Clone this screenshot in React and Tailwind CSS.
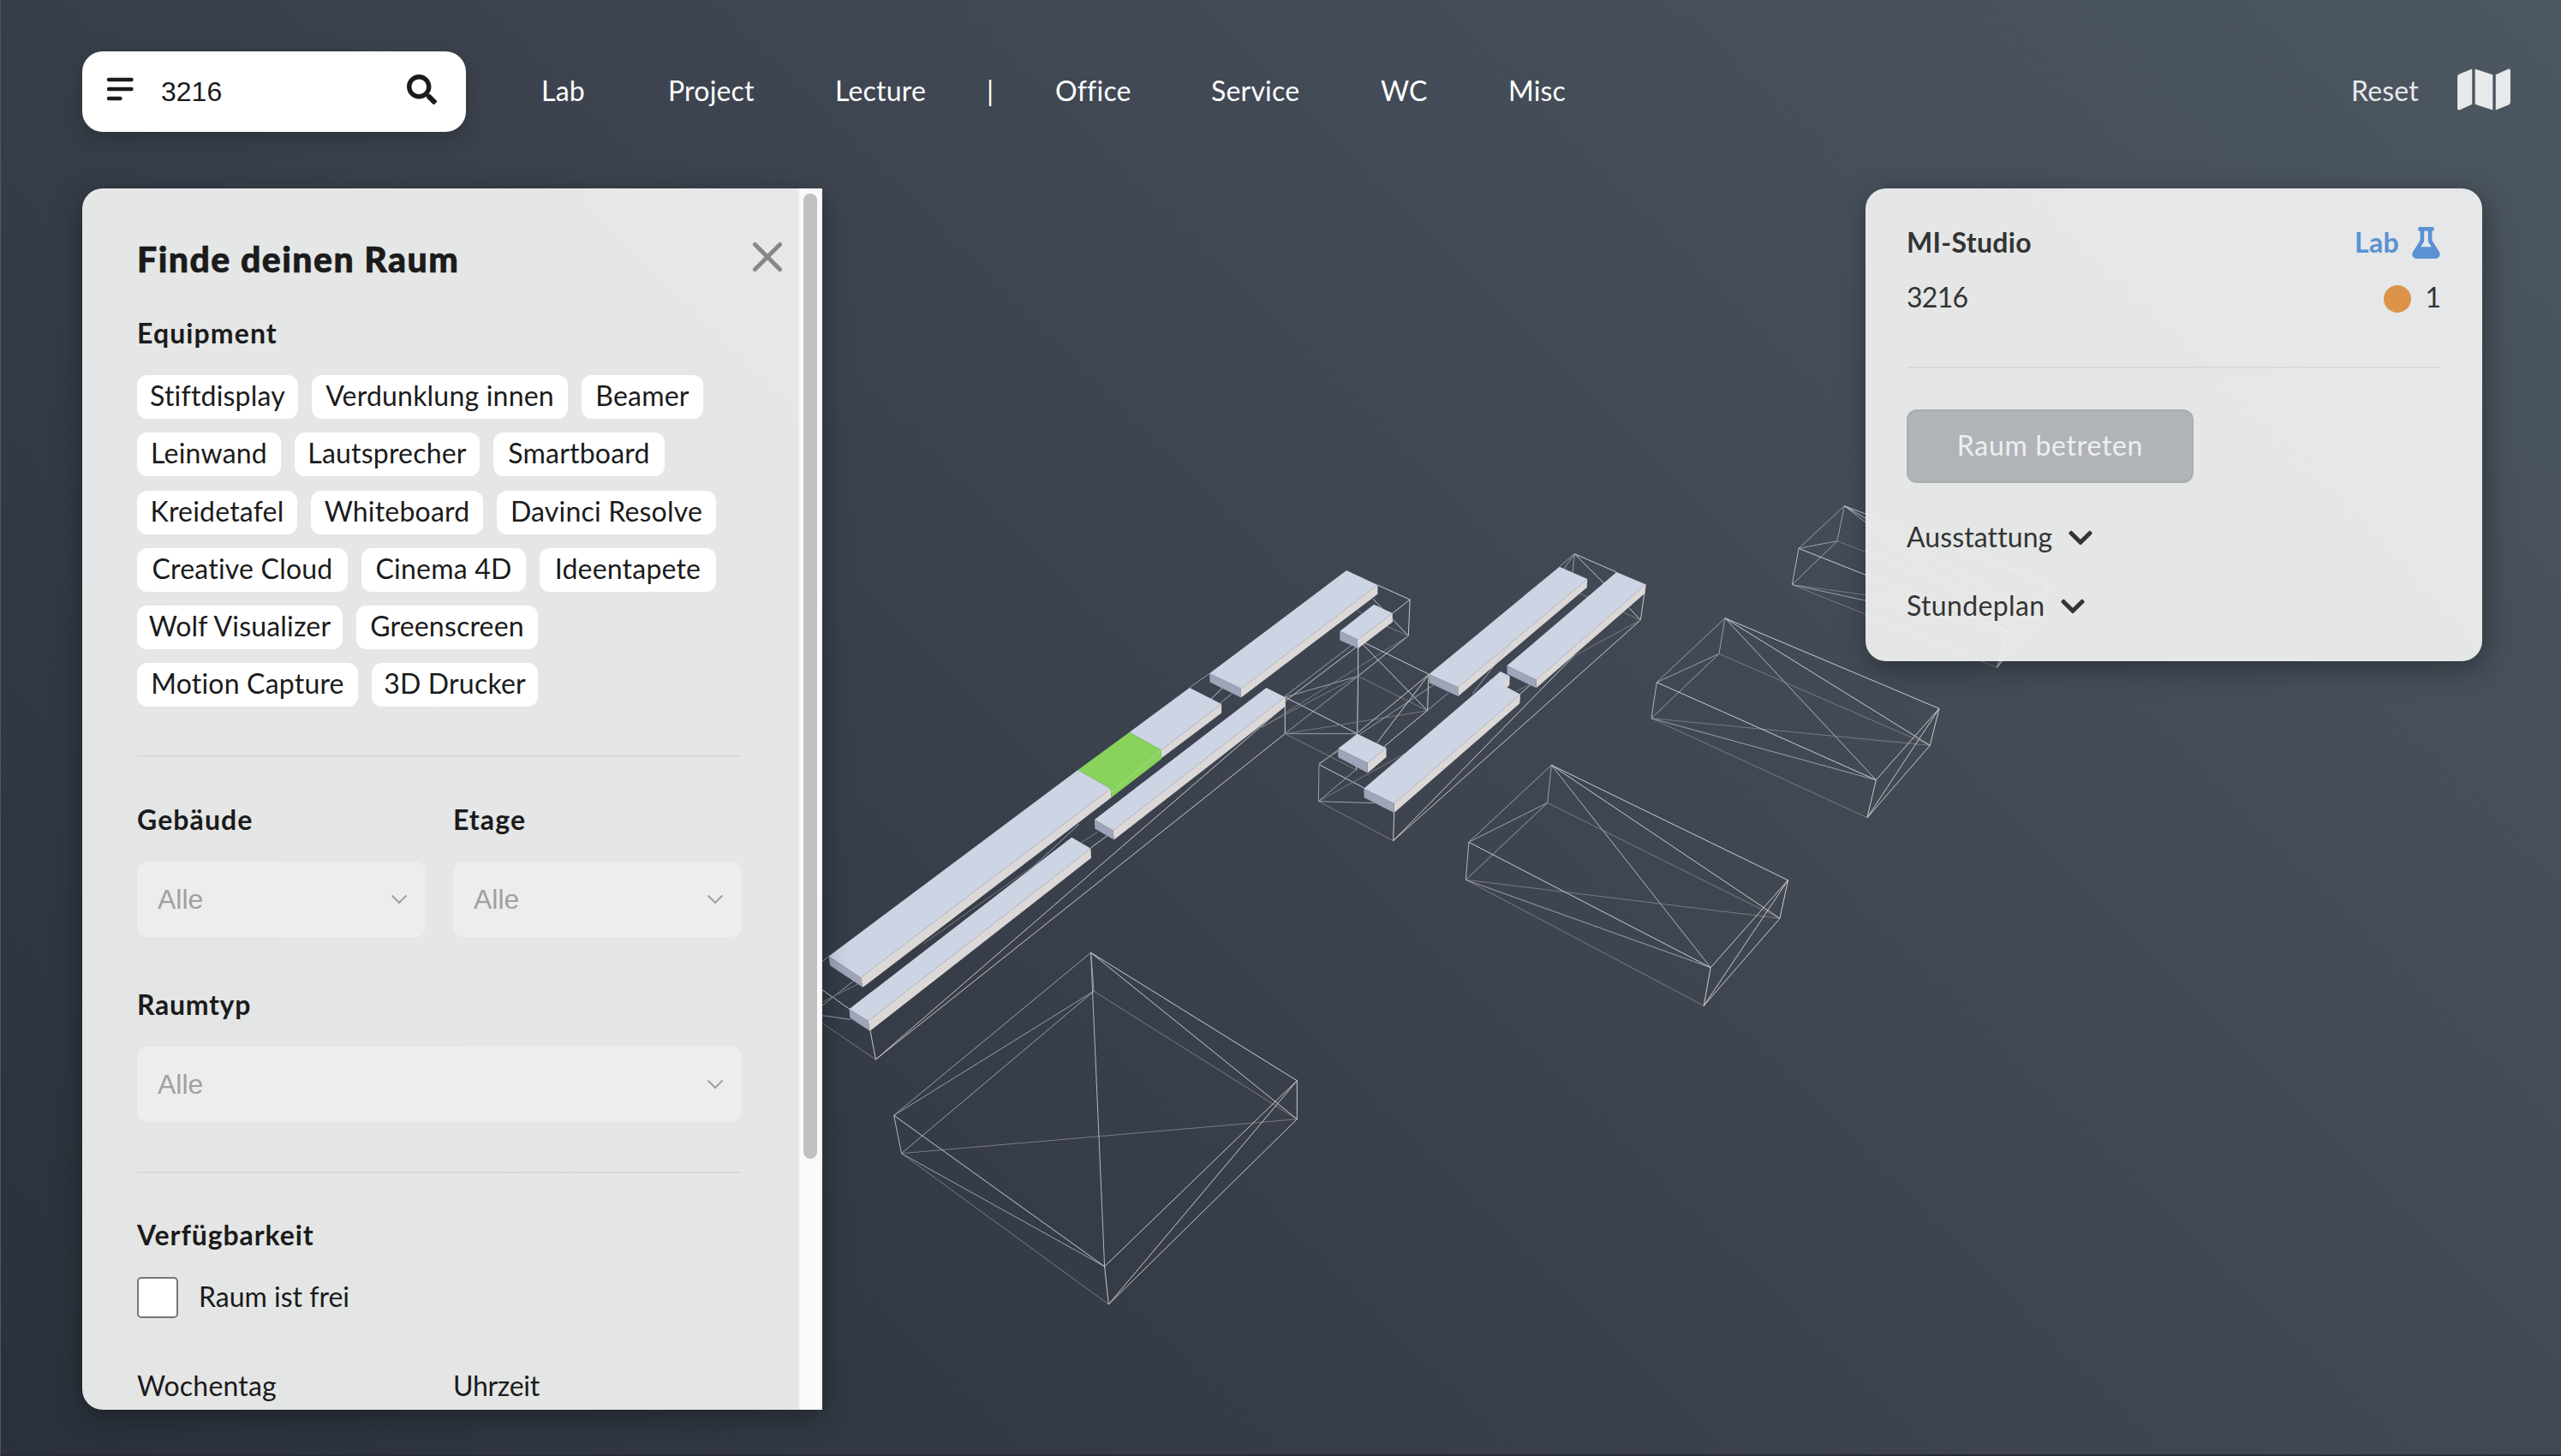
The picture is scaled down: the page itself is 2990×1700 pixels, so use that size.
import React from 'react';
import { FaSearch, FaFlask, FaMap, FaChevronDown } from 'react-icons/fa';

const CHIP_ROWS = [
  [['Stiftdisplay', 'w-[188px]'], ['Verdunklung innen', 'w-[299px]'], ['Beamer', 'w-[142px]']],
  [['Leinwand', 'w-[168px]'], ['Lautsprecher', 'w-[216px]'], ['Smartboard', 'w-[200px]']],
  [['Kreidetafel', 'w-[187px]'], ['Whiteboard', 'w-[201px]'], ['Davinci Resolve', 'w-[256px]']],
  [['Creative Cloud', 'w-[246px]'], ['Cinema 4D', 'w-[192px]'], ['Ideentapete', 'w-[206px]']],
  [['Wolf Visualizer', 'w-[240px]'], ['Greenscreen', 'w-[212px]']],
  [['Motion Capture', 'w-[258px]'], ['3D Drucker', 'w-[194px]']],
];

const NAV = [
  ['Lab', 'w-[148px]'],
  ['Project', 'w-[195px]'],
  ['Lecture', 'w-[177px]'],
  ['|', 'w-[80px]'],
  ['Office', 'w-[182px]'],
  ['Service', 'w-[198px]'],
  ['WC', 'w-[149px]'],
  ['Misc', 'w-[80px]'],
];

/* ---------- 3D campus ---------- */

const COOL = '#c3cddb';
const TEAL = '#93a3ae';
const WARM = '#cfc8c6';
const DIM = '#7c7a7d';
const TOP = '#cdd4e3';
const SIDE = '#dcd8d8';
const FRONT = '#9fa4b8';

// Corner order: four roof points clockwise from the back, then the four floor points below them.
const BOXES = [
  [[1811.3, 893.3], [2087.5, 1027.7], [1997.2, 1129.7], [1714.8, 983.3], [1806.7, 937.3], [2078, 1072.3], [1989.2, 1174.3], [1711.4, 1027.3]],
  [[2014, 721.7], [2264, 827.3], [2190.3, 910.7], [1934.3, 796.7], [2007, 763.3], [2253.3, 870.3], [2180, 954.7], [1928, 838.7]],
  [[2153.3, 590.7], [2392.3, 681.3], [2343.3, 736.7], [2100, 640.3], [2145, 631.7], [2380, 722.7], [2331.7, 779.3], [2092.3, 682.7]],
  [[1273.6, 1112.3], [1514.3, 1261.7], [1289.6, 1478.7], [1043.6, 1302.3], [1277.1, 1157.3], [1514.3, 1306.7], [1294.3, 1523], [1052.5, 1346.7]],
];

const BOX_EDGES = [
  [4, 5, DIM], [6, 7, DIM], [7, 5, DIM], [7, 4, TEAL], [4, 3, TEAL], [0, 4, TEAL], [3, 0, TEAL],
  [7, 2, '#9aa0b5'], [0, 2, '#a9b8c3'], [3, 7, '#a9b8c3'], [0, 1, COOL], [2, 3, COOL],
  [1, 2, WARM], [5, 6, WARM], [1, 6, WARM], [1, 5, WARM], [2, 6, WARM], [0, 5, WARM],
];

const WEST = {
  lines: [
    [1379, 109, 1457, 152, COOL], [1457, 152, 1453, 259, WARM], [1457, 152, 1415, 192, WARM], [1453, 259, 1368, 150, WARM],
    [1453, 259, 1400, 230, DIM], [1330, 185, 1345, 195, DIM], [1453, 259, 1332, 378, WARM], [1453, 259, 1100, 530, DIM],
    [926, 412, 974, 370, TEAL], [978, 445, 1018, 398, COOL], [1000, 458, 1028, 430, TEAL],
    [1332, 272, 1156, 437, TEAL], [1332, 288, 1156, 452, WARM], [1332, 270, 1332, 378, COOL], [1332, 378, 1330, 548, COOL],
    [1332, 270, 1502, 372, COOL], [1332, 270, 1499, 480, WARM], [1332, 378, 1156, 440, TEAL], [1332, 378, 1156, 548, TEAL],
    [1332, 378, 1499, 480, DIM], [1502, 372, 1499, 480, WARM], [1156, 440, 1330, 548, COOL], [1156, 440, 1156, 548, COOL],
    [1156, 548, 1330, 548, '#9aa0b5'], [1156, 548, 1499, 480, DIM], [1156, 548, 1328, 655, DIM],
    [1156, 548, 170, 1510, WARM], [1156, 465, 170, 1510, WARM], [1332, 378, 1100, 528, DIM],
    [156, 1420, 170, 1510, WARM], [170, 1510, 42, 1403, DIM], [42, 1220, 57, 1205, TEAL], [42, 1305, 108, 1362, COOL],
    [42, 1350, 120, 1275, TEAL], [42, 1340, 139, 1280, DIM], [42, 1380, 110, 1392, '#9aa0b5'],
    [688, 885, 742, 836, WARM], [664, 870, 705, 838, DIM], [550, 940, 660, 815, TEAL], [285, 1168, 560, 930, DIM],
  ],
  blocks: [
    ['1304,66 1379,109 1050,415 974,370', '1379,109 1379,136 1050,441 1050,415', '974,370 1050,415 1050,441 975,396'],
    ['1370,166 1415,192 1332,270 1288,245', '1415,192 1415,218 1332,296 1332,270', '1288,245 1332,270 1332,296 1288,272'],
    ['926,412 1003,460 858,596 781,544', '1003,460 1003,487 858,620 858,596', ''],
    ['657,655 736,710 134,1268 57,1205', '736,710 738,736 139,1297 134,1268', '57,1205 134,1268 139,1297 60,1232'],
    ['1111,412 1156,440 742,834 697,802', '1156,440 1156,468 744,861 742,834', '697,802 742,834 744,861 698,828'],
    ['642,854 688,887 152,1396 106,1361', '688,887 689,915 156,1426 152,1396', '106,1361 152,1396 156,1426 108,1387'],
    ['1330,548 1400,590 1355,634 1284,592', '1400,590 1400,617 1355,664 1355,634', '1284,592 1355,634 1355,664 1284,618'],
  ],
};

const EAST = {
  lines: [
    [180, 818, 338, 900, COOL], [180, 818, 178, 947, TEAL], [178, 947, 440, 1085, DIM], [178, 947, 375, 953, '#9aa0b5'],
    [440, 1085, 443, 985, WARM], [440, 1085, 1306, 312, WARM], [440, 1085, 1075, 435, WARM], [1306, 312, 1324, 187, WARM],
    [1306, 312, 1245, 285, DIM], [1306, 312, 1265, 268, WARM], [1306, 312, 1060, 445, DIM], [480, 780, 178, 947, DIM],
    [180, 818, 248, 765, TEAL], [180, 814, 248, 770, TEAL], [178, 947, 310, 835, TEAL], [310, 825, 312, 838, WARM],
    [1075, 80, 1022, 125, TEAL], [1075, 80, 1222, 144, COOL], [1075, 80, 1068, 145, TEAL], [1075, 80, 1178, 183, WARM],
    [1075, 80, 1038, 132, TEAL], [1092, 218, 1122, 232, DIM], [565, 502, 318, 705, WARM], [580, 540, 318, 715, TEAL],
    [565, 502, 383, 742, WARM], [560, 628, 408, 755, WARM], [632, 568, 560, 628, TEAL], [941, 521, 883, 572, WARM],
    [872, 560, 935, 530, DIM], [798, 465, 718, 570, TEAL],
  ],
  blocks: [
    ['1022,125 1120,168 667,547 565,502', '1120,168 1118,198 667,579 667,547', '565,502 667,547 667,579 566,532'],
    ['815,492 848,508 820,545 800,540 760,540', '848,508 847,540 838,548 818,540', ''],
    ['1222,144 1324,187 941,521 838,472', '1324,187 1321,218 941,550 941,521', '838,472 941,521 941,550 839,500'],
    ['785,518 885,572 443,955 337,902', '885,572 883,604 443,987 443,955', '337,902 443,955 443,987 338,934'],
  ],
};

function Building({ data, transform, children }) {
  return (
    <g transform={transform}>
      {data.lines.map(([x1, y1, x2, y2, c], i) => (
        <line key={i} x1={x1} y1={y1} x2={x2} y2={y2} stroke={c} strokeWidth="1" vectorEffect="non-scaling-stroke" />
      ))}
      {data.blocks.map(([top, side, front], i) => (
        <g key={i}>
          <polygon points={top} fill={TOP} />
          <polygon points={side} fill={SIDE} />
          <polygon points={front} fill={FRONT} />
        </g>
      ))}
      {children}
    </g>
  );
}

function Campus() {
  return (
    <svg className="absolute -left-px top-0 h-[1700px] w-[2990px] max-w-none" viewBox="0 0 2990 1700">
      {BOXES.map((pts, b) => (
        <g key={b}>
          {BOX_EDGES.map(([p, q, c], i) => (
            <line key={i} x1={pts[p][0]} y1={pts[p][1]} x2={pts[q][0]} y2={pts[q][1]} stroke={c} strokeWidth="1" />
          ))}
        </g>
      ))}
      <Building data={WEST} transform="translate(940 640) scale(0.48469 0.39541)">
        <polygon points="781,544 858,596 858,623 738,736 736,710 657,655" fill="#87d35c" />
        <line x1="738" y1="722" x2="858" y2="596" stroke="#a9d992" strokeWidth="1" vectorEffect="non-scaling-stroke" />
        <line x1="1332" y1="270" x2="1332" y2="300" stroke={COOL} strokeWidth="1" vectorEffect="non-scaling-stroke" />
      </Building>
      <Building data={EAST} transform="translate(1480 620) scale(0.33333)">
        <line x1="865" y1="375" x2="798" y2="465" stroke="#bcc4d5" strokeWidth="1" vectorEffect="non-scaling-stroke" />
      </Building>
    </svg>
  );
}

/* ---------- UI ---------- */

function Select({ className }) {
  return (
    <div className={`flex h-[88px] items-center justify-between rounded-xl bg-[#ededed] pl-6 pr-[21px] ${className}`}>
      <span className="font-['Liberation_Sans',sans-serif] text-[32px] leading-[36px] tracking-normal text-[#a0a0a0]">Alle</span>
      <svg width="20" height="12" viewBox="0 0 20 12" fill="none" stroke="#a0a0a0" strokeWidth="2">
        <path d="M1.5 1.5 L10 10 L18.5 1.5" />
      </svg>
    </div>
  );
}

function Header() {
  return (
    <header className="flex h-[94px] items-center">
      <div className="flex h-[94px] w-[448px] items-center rounded-3xl bg-white pl-7 pr-[34px] shadow-[0_8px_24px_rgba(0,0,0,0.2)]">
        <svg width="33" height="30" viewBox="0 0 33 30" stroke="#1b1b1b" strokeWidth="4.4" strokeLinecap="round" className="-mt-1.5">
          <path d="M3 4H29.500M3 15H29.500M3 26H16.500" />
        </svg>
        <span className="-mt-px ml-[31px] font-['Liberation_Sans',sans-serif] text-[32px] leading-9 tracking-normal text-[#1b1b1b]">3216</span>
        <FaSearch className="-mt-1.5 ml-auto size-[35px] text-[#1b1b1b]" />
      </div>
      <nav className="-mt-0.5 ml-[88px] flex grow text-white">
        {NAV.map(([label, w]) => (
          <span key={label} className={`shrink-0 whitespace-nowrap ${w}`}>{label}</span>
        ))}
      </nav>
      <div className="flex items-center pr-px text-[#e8e9ea]">
        <span className="-mt-0.5">Reset</span>
        <FaMap className="-mt-1.5 ml-[45px] h-[55px] w-[62px]" />
      </div>
    </header>
  );
}

function FilterPanel() {
  return (
    <aside className="flex h-[1426px] w-[864px] overflow-hidden rounded-l-3xl bg-[#f8f9f8]/90 text-[#1b1b1b] shadow-[0_8px_32px_rgba(0,0,0,0.35)]">
      <div className="flex w-[836px] flex-col pl-16">
        <div className="mt-[59px] flex h-12 items-center justify-between pr-[18px]">
          <h1 className="text-[41px] font-black leading-[48px] tracking-[1.45px] [-webkit-text-stroke:0.7px_#1b1b1b]">Finde deinen Raum</h1>
          <svg width="36" height="36" viewBox="0 0 36 36" stroke="#878787" strokeWidth="5" strokeLinecap="round" className="-mt-1.5">
            <path d="M3.500 3.500L32.500 32.500M32.500 3.500L3.500 32.500" />
          </svg>
        </div>
        <h2 className="mt-[42px] font-bold tracking-[1.1px]">Equipment</h2>
        <div className="mt-[29px] flex flex-col gap-[16.3px]">
          {CHIP_ROWS.map((row) => (
            <div key={row[0][0]} className="flex gap-4">
              {row.map(([label, w]) => (
                <span key={label} className={`flex h-[51px] justify-center whitespace-nowrap rounded-xl bg-white leading-[47px] ${w}`}>{label}</span>
              ))}
            </div>
          ))}
        </div>
        <hr className="mt-[57px] w-[706px] border-t-2 border-[#d9dad9]" />
        <div className="mt-[53px] flex gap-8">
          <div>
            <h2 className="font-bold tracking-[1.1px]">Gebäude</h2>
            <Select className="mt-[29px] w-[337px]" />
          </div>
          <div>
            <h2 className="font-bold tracking-[1.1px]">Etage</h2>
            <Select className="mt-[29px] w-[337px]" />
          </div>
        </div>
        <h2 className="mt-[59px] font-bold tracking-[0.700px]">Raumtyp</h2>
        <Select className="mt-[29px] w-[706px]" />
        <hr className="mt-[58px] w-[706px] border-t-2 border-[#d9dad9]" />
        <h2 className="mt-[52px] font-bold tracking-[0.900px]">Verfügbarkeit</h2>
        <div className="mt-[29px] flex items-center gap-6">
          <span className="size-12 rounded-[5px] border-2 border-[#767676] bg-white" />
          <span className="-mt-[3px] tracking-normal">Raum ist frei</span>
        </div>
        <div className="mt-[59px] flex">
          <span className="w-[369px]">Wochentag</span>
          <span className="tracking-[-0.300px]">Uhrzeit</span>
        </div>
      </div>
      <div className="w-7 border-x-2 border-l-[#f0f0f0] border-r-[#f0f0f0] bg-[#fafafa] pl-1 pt-1.5">
        <div className="h-[1127px] w-4 rounded-full bg-[#c1c1c1]" />
      </div>
    </aside>
  );
}

function RoomCard() {
  return (
    <section className="flex h-[552px] w-[720px] flex-col rounded-3xl bg-[#eeefef]/95 px-12 text-[#333434] shadow-[4px_8px_32px_rgba(0,0,0,0.35)]">
      <div className="mt-[43px] flex items-center justify-between">
        <span className="font-bold tracking-[0.300px]">MI-Studio</span>
        <span className="flex items-center gap-[15px] text-[#5a91d3]">
          <span className="font-bold tracking-[0.300px]">Lab</span>
          <FaFlask className="mr-px h-[37px] w-[33px]" />
        </span>
      </div>
      <div className="mt-6 flex items-center justify-between">
        <span className="tracking-[-0.700px]">3216</span>
        <span className="flex items-center gap-4 tracking-normal">
          <span className="mt-[3px] size-8 rounded-full bg-[#db934a]" />
          <span>1</span>
        </span>
      </div>
      <hr className="mt-[61px] w-[624px] border-t-2 border-[#d9dada]" />
      <button className="mt-[48px] h-[86px] w-[335px] shrink-0 rounded-xl border-2 border-[#abaeb1] bg-[#b0b4b8] pb-[3px] tracking-[0.700px] text-[#eeefef]">Raum betreten</button>
      <div className="mt-[43px] flex items-center gap-[19px]">
        <span className="tracking-[0.100px]">Ausstattung</span>
        <FaChevronDown className="mt-px h-8 w-7" />
      </div>
      <div className="mt-10 flex items-center gap-[19px]">
        <span className="tracking-[0.350px]">Stundeplan</span>
        <FaChevronDown className="mt-px h-8 w-7" />
      </div>
    </section>
  );
}

export default function App() {
  return (
    <div className="relative h-[1700px] w-[2990px] overflow-hidden border-b-2 border-l border-b-[#2a2b38] border-l-[#50565e] bg-[linear-gradient(45deg,#2a313b_0%,#373e49_36%,#3d444f_50%,#424a56_66%,#4c5761_100%)] font-['Lato','Open_Sans',sans-serif] text-[32px] leading-10 tracking-[0.200px]">
      <Campus />
      <div className="relative flex flex-col pl-[95px] pr-[58px] pt-[60px]">
        <Header />
        <main className="mt-[66px] flex items-start justify-between pr-[34px]">
          <FilterPanel />
          <RoomCard />
        </main>
      </div>
    </div>
  );
}
